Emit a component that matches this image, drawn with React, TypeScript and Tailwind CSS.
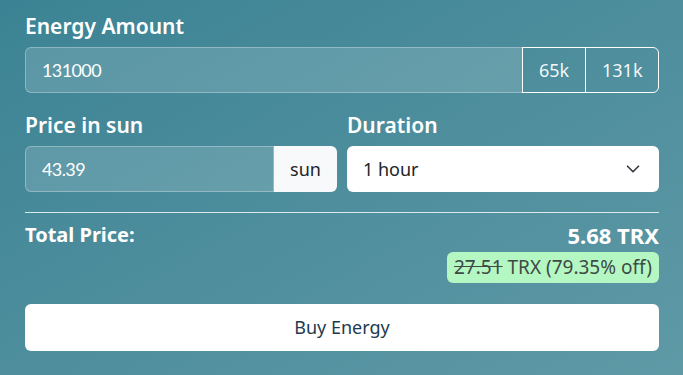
import React, { useState } from 'react';
import { ChevronDown } from 'lucide-react';

const presets = [
  { label: '65k', value: '65000' },
  { label: '131k', value: '131000' },
];

export default function App() {
  const [energy, setEnergy] = useState('131000');
  const [price, setPrice] = useState('43.39');
  const [duration, setDuration] = useState('1 hour');

  return (
    <div
      className="w-[683px] h-[375px] overflow-hidden bg-gradient-to-br from-[#3b8394] to-[#5f99a6] pl-[25px] pr-[24px] pt-[12px] text-white"
      style={{ fontFamily: '"Noto Sans", "Open Sans", sans-serif' }}
    >
      {/* Energy amount */}
      <label className="block text-[21px] font-semibold leading-7 mb-[7px]">Energy Amount</label>
      <div className="flex h-[46px]">
        <input
          value={energy}
          onChange={e => setEnergy(e.target.value)}
          className="flex-1 min-w-0 rounded-l-md border border-white/30 bg-white/15 px-4 text-[18px] tracking-[-0.6px] text-white outline-none"
          style={{ fontFamily: 'Lato, sans-serif' }}
        />
        {presets.map((p, i) => (
          <button
            key={p.label}
            onClick={() => setEnergy(p.value)}
            className={`border border-white px-4 text-[18px] text-white/95 ${i === 0 ? 'w-[64px] -ml-px' : 'w-[74px] -ml-px rounded-r-md'}`}
          >
            {p.label}
          </button>
        ))}
      </div>

      {/* Price + duration */}
      <div className="mt-[18px] grid grid-cols-2 gap-[10px]">
        <div>
          <label className="block text-[21px] font-semibold leading-7 mb-[7px]">Price in sun</label>
          <div className="flex h-[46px]">
            <input
              value={price}
              onChange={e => setPrice(e.target.value)}
              className="flex-1 min-w-0 rounded-l-md border border-white/30 bg-white/15 px-4 text-[18px] tracking-[-0.6px] text-white outline-none"
              style={{ fontFamily: 'Lato, sans-serif' }}
            />
            <span className="flex w-[63px] items-center justify-center rounded-r-md bg-[#f8f9fa] text-[18px] text-[#212529]">
              sun
            </span>
          </div>
        </div>
        <div>
          <label className="block text-[21px] font-semibold leading-7 mb-[7px]">Duration</label>
          <div className="relative h-[46px]">
            <select
              value={duration}
              onChange={e => setDuration(e.target.value)}
              className="h-full w-full appearance-none rounded-md bg-white px-4 text-[18px] text-[#212529] outline-none"
            >
              <option>1 hour</option>
              <option>1 day</option>
              <option>3 days</option>
            </select>
            <ChevronDown className="pointer-events-none absolute right-[15px] top-[12px] h-[22px] w-[22px] text-[#343a40]" strokeWidth={1.8} />
          </div>
        </div>
      </div>

      <hr className="mt-[20px] border-t border-white/80" />

      {/* Total */}
      <div className="mt-[8px] flex items-start justify-between">
        <span className="text-[20px] font-bold leading-7">Total Price:</span>
        <span className="text-[22px] font-bold leading-7">5.68 TRX</span>
      </div>
      <div className="mt-[3px] flex justify-end">
        <span className="rounded-md bg-[#b5f7c3] px-[7px] py-[2px] text-[19px] leading-[27px] text-[#3d4a45]">
          <s>27.51</s> TRX (79.35% off)
        </span>
      </div>

      <button className="mt-[21px] h-[47px] w-full rounded-md bg-white text-[18px] text-[#1e3a4c]">
        Buy Energy
      </button>
    </div>
  );
}
